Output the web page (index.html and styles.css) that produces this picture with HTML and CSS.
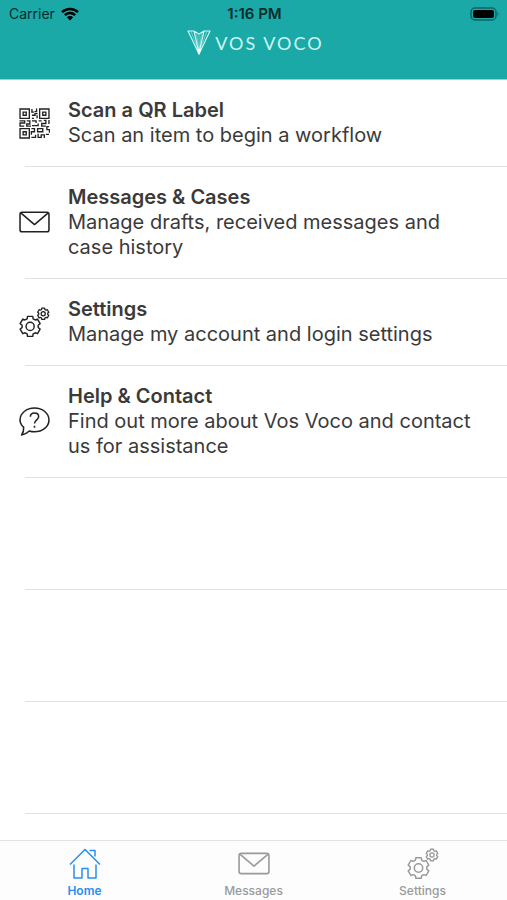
FILE: index.html
```html
<!DOCTYPE html>
<html lang="en">
<head>
  <meta charset="UTF-8">
  <meta name="viewport" content="width=device-width, initial-scale=1.0">
  <title>Vos Voco</title>
  <link rel="stylesheet" href="styles.css">
</head>
<body>
  <!-- Shared icons -->
  <svg class="icon-defs" aria-hidden="true">
    <symbol id="icon-mail" viewBox="0 0 30 30">
      <rect x="1" y="5" width="28" height="19" rx="2"/>
      <path d="M2 6l13 11L28 6"/>
    </symbol>
    <symbol id="icon-gears" viewBox="0 0 32 32">
      <g id="gear" transform="translate(11.5 20)">
        <path d="M-2.700-10.300h5.400l.4 2.500 2.200 1.200 2.300-.9 2.700 4.700-2 1.600v2.400l2 1.600-2.700 4.700-2.300-.9-2.200 1.200-.4 2.500h-5.400l-.4-2.500-2.200-1.200-2.300.9-2.700-4.700 2-1.600v-2.400l-2-1.600 2.700-4.700 2.300.9 2.200-1.200z"/>
        <circle r="4.200"/>
      </g>
      <g class="gear-small" transform="translate(25 7) scale(.56)">
        <path d="M-2.700-10.300h5.400l.4 2.500 2.200 1.200 2.300-.9 2.700 4.700-2 1.600v2.400l2 1.600-2.700 4.700-2.300-.9-2.200 1.200-.4 2.500h-5.400l-.4-2.500-2.200-1.200-2.300.9-2.700-4.700 2-1.600v-2.400l-2-1.600 2.700-4.700 2.300.9 2.200-1.200z"/>
        <circle r="3.800"/>
      </g>
    </symbol>
  </svg>

  <header class="header">
    <div class="status-bar">
      <div class="carrier">
        <span>Carrier</span>
        <svg class="wifi" viewBox="0 0 18 14">
          <path d="M1 5.200a11.500 11.500 0 0 1 16 0M3.900 8.200a7.300 7.300 0 0 1 10.200 0"/>
          <path class="wifi-dot" d="M5.800 10.300a4.600 4.600 0 0 1 6.400 0L9 13.600z"/>
        </svg>
      </div>
      <span class="time">1:16 PM</span>
      <svg class="battery" viewBox="0 0 30 14">
        <rect class="battery-case" x="1" y="1" width="25" height="12" rx="4"/>
        <rect x="3" y="3" width="21" height="8" rx="2"/>
        <path class="battery-tip" d="M27.500 5a2.500 2.500 0 0 1 0 4z"/>
      </svg>
    </div>
    <div class="brand">
      <svg class="brand-mark" viewBox="0 0 24 26">
        <path d="M1 1h6l5 3 5-3h6L12 24zM7 1l5 22 5-22"/>
        <path class="brand-rays" d="M4 1l8 22 8-22M12 4v19M9.500 3L12 23l2.500-20"/>
        <path class="brand-tip" d="M9.500 19l2.500 6 2.500-6z"/>
      </svg>
      <span class="brand-name">VOS VOCO</span>
    </div>
  </header>

  <main class="menu">
    <a class="menu-item" href="#scan">
      <svg class="menu-icon qr" viewBox="0 0 30 30">
        <path d="M1 1h9v9H1zM4 4h3v3H4zM20 1h9v9h-9zM23 4h3v3h-3zM1 20h9v9H1zM4 23h3v3H4z"/>
        <path d="M12.500 1v3h2M17 .5v3h-2M12.500 7h3V5.500H18M12.500 10h2M17.500 7v3M.5 12.500h5v2H1v3h4M7.500 12.500h3v3h-3v2h4M12.500 12.500h4v2M12.500 17h6v-2M19 12.500h3M24 12h2v3h-4v2.500h4M29 11.500v4M29 18h-2v3h2.500v3M12 20h3v3h-3v3M18 20h5v3h-5zM12 28.500h4V26M18.500 25v3.500h3V26h3v3M26 25.500h3"/>
      </svg>
      <div class="menu-text">
        <h2>Scan a QR Label</h2>
        <p>Scan an item to begin a workflow</p>
      </div>
    </a>
    <a class="menu-item" href="#messages">
      <svg class="menu-icon"><use href="#icon-mail"/></svg>
      <div class="menu-text">
        <h2>Messages &amp; Cases</h2>
        <p>Manage drafts, received messages and case history</p>
      </div>
    </a>
    <a class="menu-item" href="#settings">
      <svg class="menu-icon"><use href="#icon-gears"/></svg>
      <div class="menu-text">
        <h2>Settings</h2>
        <p>Manage my account and login settings</p>
      </div>
    </a>
    <a class="menu-item" href="#help">
      <svg class="menu-icon" viewBox="0 0 30 30">
        <path d="M4.500 20.500C2.200 18.500 1 16 1 13.500 1 7 7.300 2 15 2s14 5 14 11.500S22.700 25 15 25c-1.800 0-3.500-.3-5-.8-2 2-4.500 3.200-7.500 3.800 1.500-2 2.200-4.500 2-7.500z"/>
        <path d="M11 10.500c0-2.300 1.700-3.700 4-3.700s4 1.400 4 3.500c0 3-4 3.200-4 6.700M15 19v2"/>
      </svg>
      <div class="menu-text">
        <h2>Help &amp; Contact</h2>
        <p>Find out more about Vos Voco and contact us for assistance</p>
      </div>
    </a>
    <div class="menu-empty"></div>
    <div class="menu-empty"></div>
    <div class="menu-empty"></div>
  </main>

  <nav class="tab-bar">
    <a class="tab active" href="#home">
      <svg class="tab-icon" viewBox="0 0 32 32">
        <path d="M1 16.500L16 1.500l15 15M5 16.500V30h8V20.500h6V30h8V16.500M20.500 2.500H26V8.500"/>
      </svg>
      <span>Home</span>
    </a>
    <a class="tab" href="#messages">
      <svg class="tab-icon"><use href="#icon-mail"/></svg>
      <span>Messages</span>
    </a>
    <a class="tab" href="#settings">
      <svg class="tab-icon"><use href="#icon-gears"/></svg>
      <span>Settings</span>
    </a>
  </nav>
</body>
</html>
```
FILE: styles.css
```css
* {
  margin: 0;
  padding: 0;
  box-sizing: border-box;
}

body {
  font-family: Inter, 'Liberation Sans', sans-serif;
  display: flex;
  flex-direction: column;
  height: 100vh;
  background: #fff;
  color: #3a3a3a;
}

a {
  color: inherit;
  text-decoration: none;
}

svg {
  display: block;
  flex: none;
  fill: none;
  stroke: currentColor;
  stroke-width: 1.5;
  stroke-linejoin: round;
}

.icon-defs {
  position: absolute;
  width: 0;
  height: 0;
}

.gear-small {
  stroke-width: 2.4;
}

/* Header */
.header {
  flex: none;
  height: 80px;
  background: #1aa9a6;
  border-bottom: 1px solid #8fd6d4;
}

.status-bar {
  display: grid;
  grid-template-columns: 1fr auto 1fr;
  align-items: center;
  height: 27px;
  padding: 0 7px 0 9px;
  font-size: 14px;
  color: #062b2c;
}

.carrier {
  display: flex;
  align-items: center;
  gap: 6px;
}

.wifi {
  width: 18px;
  height: 14px;
  color: #000;
  stroke-width: 2.5;
}

.wifi-dot {
  fill: #000;
  stroke: none;
}

.time {
  font-size: 15px;
  font-weight: 600;
}

.battery {
  justify-self: end;
  width: 30px;
  height: 14px;
  fill: #000;
  stroke: none;
}

.battery-case {
  fill: none;
  stroke: #0e6665;
}

.battery-tip {
  fill: #0e6665;
}

.brand {
  display: flex;
  justify-content: center;
  align-items: center;
  gap: 4px;
  height: 32px;
  padding-left: 4px;
  color: #c9f7f5;
}

.brand-mark {
  width: 24px;
  height: 26px;
  stroke-width: 1.2;
}

.brand-rays {
  stroke-width: 0.5;
}

.brand-tip {
  fill: #fff;
  stroke: none;
}

.brand-name {
  font-family: Lato, sans-serif;
  font-size: 18px;
  letter-spacing: 2px;
}

/* Menu list */
.menu {
  flex: 1;
  overflow: hidden;
}

.menu-item {
  display: flex;
  align-items: center;
  gap: 18px;
  padding: 18px 28px 18px 19px;
}

.menu-item,
.menu-empty {
  border-bottom: 1px solid transparent;
  border-image: linear-gradient(to right, transparent 26px, #e2e2e2 26px) 1;
}

.menu-empty {
  height: 112px;
}

.menu-icon {
  width: 31px;
  height: 31px;
  color: #222;
}

.qr {
  stroke-width: 1.3;
  stroke-linejoin: miter;
}

.menu-text {
  font-size: 20px;
  line-height: 25px;
}

.menu-text h2 {
  font-size: 20px;
  font-weight: 600;
}

/* Tab bar */
.tab-bar {
  flex: none;
  display: flex;
  height: 60px;
  border-top: 1px solid #e2e2e2;
  background: #fdfdfd;
}

.tab {
  flex: 1;
  display: flex;
  flex-direction: column;
  align-items: center;
  gap: 3px;
  padding-top: 7px;
  font-size: 12px;
  font-weight: 500;
  line-height: 16px;
  color: #9a9a9a;
}

.tab-icon {
  width: 32px;
  height: 32px;
}

.tab.active {
  font-weight: 600;
  color: #2a8df0;
}
```
